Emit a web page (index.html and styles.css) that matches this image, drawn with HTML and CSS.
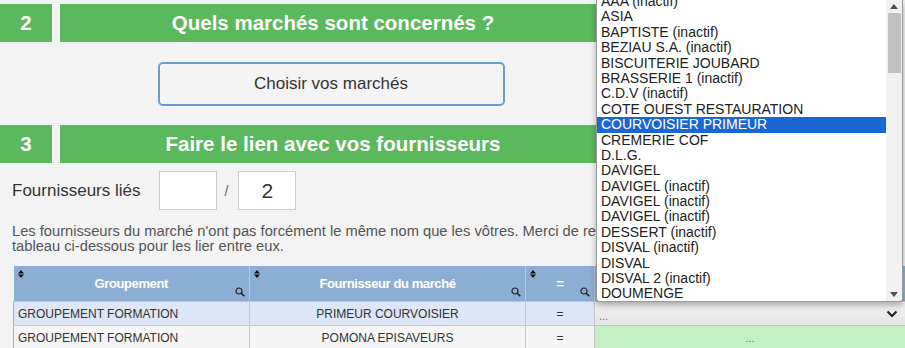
FILE: index.html
```html
<!DOCTYPE html>
<html lang="fr">
<head>
    <meta charset="UTF-8">
    <meta name="viewport" content="width=device-width, initial-scale=1.0">
    <title>Fournisseurs</title>
    <link rel="stylesheet" href="styles.css">
</head>
<body>
<div class="page">
    <div class="step-bar">
        <div class="step-num">2</div>
        <div class="step-title">Quels marchés sont concernés ?</div>
    </div>
    <div class="step-body">
        <button class="btn-outline">Choisir vos marchés</button>
    </div>

    <div class="step-bar">
        <div class="step-num">3</div>
        <div class="step-title">Faire le lien avec vos fournisseurs</div>
    </div>

    <div class="linked-row">
        <span class="linked-label">Fournisseurs liés</span>
        <div class="count-box"></div>
        <span class="count-sep">/</span>
        <div class="count-box">2</div>
    </div>

    <p class="hint">Les fournisseurs du marché n'ont pas forcément le même nom que les vôtres. Merci de remplir le<br>tableau ci-dessous pour les lier entre eux.</p>

    <table class="match-table">
        <colgroup>
            <col style="width: 236px">
            <col style="width: 276px">
            <col style="width: 69px">
            <col>
        </colgroup>
        <thead>
        <tr>
            <th><span class="sort-icon"><svg width="6" height="8" viewBox="0 0 6 8"><path d="M0 3.5 L3 0 L6 3.5 Z M0 4.5 L3 8 L6 4.5 Z" fill="#111"/></svg></span>Groupement<span class="search-icon"><svg width="10" height="10" viewBox="0 0 10 10"><circle cx="4" cy="4" r="3" fill="none" stroke="#222" stroke-width="1.2"/><path d="M6.2 6.2 L9.3 9.3" stroke="#222" stroke-width="1.6"/></svg></span></th>
            <th><span class="sort-icon"><svg width="6" height="8" viewBox="0 0 6 8"><path d="M0 3.5 L3 0 L6 3.5 Z M0 4.5 L3 8 L6 4.5 Z" fill="#111"/></svg></span>Fournisseur du marché<span class="search-icon"><svg width="10" height="10" viewBox="0 0 10 10"><circle cx="4" cy="4" r="3" fill="none" stroke="#222" stroke-width="1.2"/><path d="M6.2 6.2 L9.3 9.3" stroke="#222" stroke-width="1.6"/></svg></span></th>
            <th><span class="sort-icon"><svg width="6" height="8" viewBox="0 0 6 8"><path d="M0 3.5 L3 0 L6 3.5 Z M0 4.5 L3 8 L6 4.5 Z" fill="#111"/></svg></span>=<span class="search-icon"><svg width="10" height="10" viewBox="0 0 10 10"><circle cx="4" cy="4" r="3" fill="none" stroke="#222" stroke-width="1.2"/><path d="M6.2 6.2 L9.3 9.3" stroke="#222" stroke-width="1.6"/></svg></span></th>
            <th></th>
        </tr>
        </thead>
        <tbody>
        <tr class="row-active">
            <td>GROUPEMENT FORMATION</td>
            <td class="center">PRIMEUR COURVOISIER</td>
            <td class="center">=</td>
            <td class="select-cell">
                <div class="fake-select">
                    <span>...</span>
                    <svg width="12" height="8" viewBox="0 0 12 8"><path d="M1.5 1.5 L6 6 L10.5 1.5" fill="none" stroke="#222" stroke-width="2.2"/></svg>
                </div>
            </td>
        </tr>
        <tr>
            <td>GROUPEMENT FORMATION</td>
            <td class="center">POMONA EPISAVEURS</td>
            <td class="center">=</td>
            <td class="center linked-cell">...</td>
        </tr>
        </tbody>
    </table>

    <!-- open dropdown of the first row -->
    <div class="select-popup">
        <ul class="option-list">
            <li>AAA (inactif)</li>
            <li>ASIA</li>
            <li>BAPTISTE (inactif)</li>
            <li>BEZIAU S.A. (inactif)</li>
            <li>BISCUITERIE JOUBARD</li>
            <li>BRASSERIE 1 (inactif)</li>
            <li>C.D.V (inactif)</li>
            <li>COTE OUEST RESTAURATION</li>
            <li class="selected">COURVOISIER PRIMEUR</li>
            <li>CREMERIE COF</li>
            <li>D.L.G.</li>
            <li>DAVIGEL</li>
            <li>DAVIGEL (inactif)</li>
            <li>DAVIGEL (inactif)</li>
            <li>DAVIGEL (inactif)</li>
            <li>DESSERT (inactif)</li>
            <li>DISVAL (inactif)</li>
            <li>DISVAL</li>
            <li>DISVAL 2 (inactif)</li>
            <li>DOUMENGE</li>
        </ul>
        <div class="scrollbar">
            <svg class="arrow" width="8" height="5" viewBox="0 0 8 5"><path d="M0 5 L4 0 L8 5 Z" fill="#505050"/></svg>
            <div class="scroll-track"><div class="scroll-thumb"></div></div>
            <svg class="arrow" width="8" height="5" viewBox="0 0 8 5"><path d="M0 0 L4 5 L8 0 Z" fill="#505050"/></svg>
        </div>
    </div>
</div>
</body>
</html>
```

FILE: styles.css
```css
/* General Styles */
body {
    font-family: 'Liberation Sans', Arial, sans-serif;
    margin: 0;
    padding: 0;
    background: #f3f3f3;
    color: #333;
    overflow: hidden;
}

.page {
    position: relative;
    padding-top: 4px;
}

/* Step bars */
.step-bar {
    display: flex;
    gap: 8px;
    width: 606px;
    height: 38px;
}

.step-num, .step-title {
    display: flex;
    align-items: center;
    justify-content: center;
    background: #5cb85c;
    color: #fff;
    font-size: 20.5px;
    font-weight: bold;
}

.step-num {
    width: 52px;
}

.step-title {
    flex: 1;
}

.step-body {
    width: 542px;
    margin-left: 60px;
    padding: 20px 0 19px;
    text-align: center;
}

.btn-outline {
    width: 347px;
    height: 44px;
    font-family: inherit;
    font-size: 17px;
    color: #333;
    background: #f4f4f4;
    border: 2px solid #6b9bd2;
    border-radius: 5px;
}

/* Linked suppliers counter */
.linked-row {
    display: flex;
    align-items: center;
    margin-top: 8px;
    padding-left: 12px;
}

.linked-label {
    font-size: 17px;
    margin-right: 18px;
}

.count-box {
    display: flex;
    align-items: center;
    justify-content: center;
    width: 56px;
    height: 37px;
    background: #fff;
    border: 1px solid #ccc;
    font-size: 21px;
}

.count-sep {
    margin: 0 10px 0 8px;
    font-size: 14px;
    color: #666;
}

.hint {
    margin: 14px 0 0 12px;
    font-size: 14.7px;
    line-height: 15px;
    color: #555;
}

/* Matching table */
.match-table {
    width: 893px;
    margin: 12px 0 0 13px;
    border-collapse: collapse;
    table-layout: fixed;
    font-size: 12px;
}

.match-table th {
    position: relative;
    height: 35px;
    padding: 0;
    background: #8daed4;
    color: #fff;
    font-size: 13px;
    font-weight: bold;
    letter-spacing: -0.4px;
    border-left: 1px solid #b3c8e2;
}

.match-table th:first-child {
    border-left: none;
}

.sort-icon {
    position: absolute;
    top: 4px;
    left: 4px;
    line-height: 0;
}

.search-icon {
    position: absolute;
    right: 4px;
    bottom: 4px;
    line-height: 0;
}

.match-table td {
    height: 23px;
    padding: 0 4px;
    border: 1px solid #c6c6c6;
    color: #333;
    background: #f5f5f5;
}

.match-table td:first-child {
    border-left: 1px solid #9fb6d3;
}

.match-table tr.row-active td {
    background: #dce6f6;
}

.match-table td.center {
    text-align: center;
}

.match-table td.select-cell {
    padding: 0;
}

.fake-select {
    display: flex;
    align-items: center;
    justify-content: space-between;
    height: 23px;
    padding: 0 7px 0 4px;
    background: linear-gradient(#f0f0f0, #e6e6e6);
    color: #666;
    font-size: 11px;
}

.fake-select span {
    padding-top: 4px;
}

.match-table td.linked-cell {
    background: #c5f0c5;
    color: #666;
    font-size: 11px;
}

/* Open dropdown */
.select-popup {
    position: absolute;
    left: 596px;
    top: 0;
    width: 305px;
    height: 301px;
    display: flex;
    background: #fff;
    border: 1px solid #9a9a9a;
    border-top: none;
    border-radius: 0 0 4px 4px;
    box-shadow: 0 3px 6px rgba(0, 0, 0, 0.3);
    overflow: hidden;
}

.option-list {
    flex: 1;
    margin: -6px 0 0;
    padding: 0;
    list-style: none;
    font-size: 14px;
    color: #222;
}

.option-list li {
    height: 15.4px;
    line-height: 15.4px;
    padding-left: 4px;
    white-space: nowrap;
}

.option-list li.selected {
    background: #1967d2;
    color: #fff;
}

.scrollbar {
    display: flex;
    flex-direction: column;
    align-items: center;
    width: 16px;
    background: #f1f1f1;
}

.scrollbar .arrow {
    margin: 4px 0;
}

.scroll-track {
    flex: 1;
    width: 100%;
}

.scroll-thumb {
    width: 13px;
    height: 60px;
    margin: 0 auto;
    background: #c1c1c1;
}
```
